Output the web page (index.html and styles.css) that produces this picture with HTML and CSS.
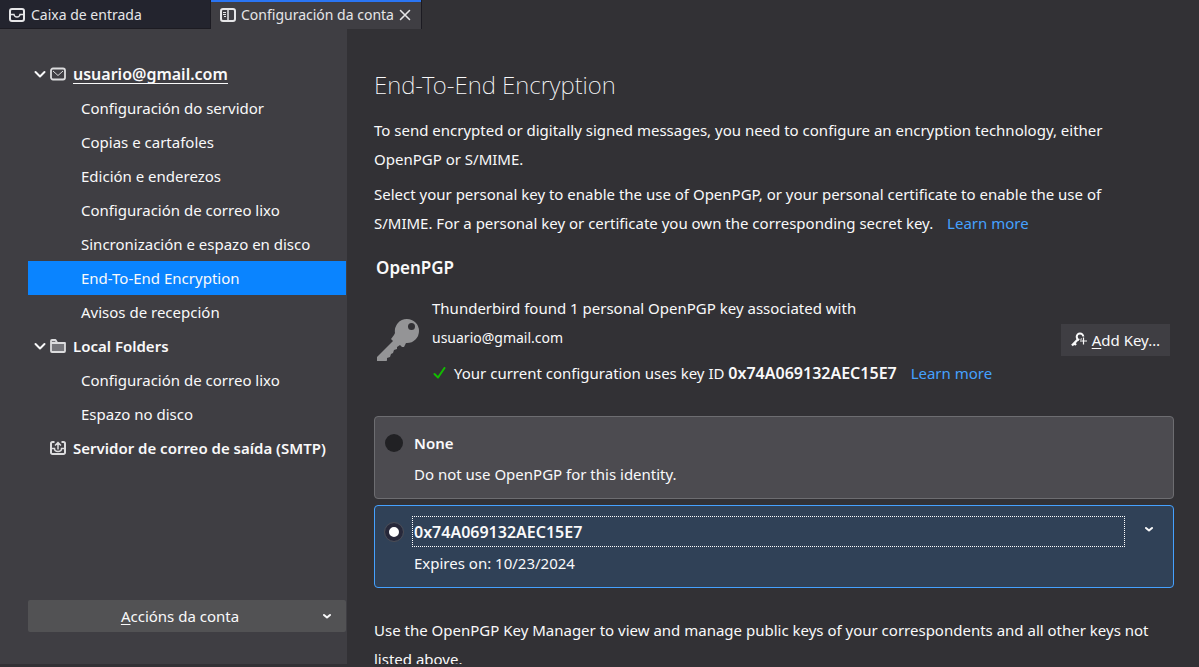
FILE: index.html
```html
<!DOCTYPE html>
<html lang="gl">
<head>
<meta charset="utf-8">
<title>Configuración da conta</title>
<link rel="stylesheet" href="styles.css">
</head>
<body>
<header class="tabs">
  <button class="tab" type="button">
    <svg class="icon" viewBox="0 0 16 16" fill="none" stroke="currentColor" stroke-width="2"><rect x="1" y="2" width="14" height="12" rx="2"/><path d="M1.500 7.500H5C5.300 9.300 6.500 10 8 10s2.700-.7 3-2.500h3.500" stroke-width="1.500"/></svg>
    <span>Caixa de entrada</span>
  </button>
  <div class="tab tab-active">
    <svg class="icon" viewBox="0 0 16 16" fill="none" stroke="currentColor" stroke-width="2"><rect x="1" y="2" width="14" height="12" rx="2"/><path d="M8 2v12" stroke-width="1.500"/><path d="M3 5.500h3M3 7.500h3M4 9.500h2" stroke-width="1"/></svg>
    <span>Configuración da conta</span>
    <button class="close" type="button" aria-label="Pechar">
      <svg viewBox="0 0 12 12" fill="none" stroke="currentColor" stroke-width="1.600" stroke-linecap="round"><path d="M1.500 1.500l9 9M10.500 1.500l-9 9"/></svg>
    </button>
  </div>
</header>
<div class="workspace">
  <nav class="sidebar">
    <ul class="tree">
      <li><a class="row group" href="#conta">
        <svg class="chevron" viewBox="0 0 12 12" fill="none" stroke="currentColor" stroke-width="2" stroke-linecap="round" stroke-linejoin="round"><path d="M1.500 4L6 8.500 10.500 4"/></svg>
        <svg class="icon" viewBox="0 0 16 16" fill="none" stroke="currentColor" stroke-width="1.800" stroke-linejoin="round"><rect x="1" y="2.500" width="14" height="11" rx="2"/><path d="M3 5l5 4.500L13 5" stroke-width="1"/></svg>
        <span class="underlined">usuario@gmail.com</span></a></li>
      <li><a class="row item" href="#servidor">Configuración do servidor</a></li>
      <li><a class="row item" href="#copias">Copias e cartafoles</a></li>
      <li><a class="row item" href="#enderezos">Edición e enderezos</a></li>
      <li><a class="row item" href="#lixo">Configuración de correo lixo</a></li>
      <li><a class="row item" href="#disco">Sincronización e espazo en disco</a></li>
      <li><a class="row item selected" href="#e2e">End-To-End Encryption</a></li>
      <li><a class="row item" href="#avisos">Avisos de recepción</a></li>
      <li><a class="row group" href="#local">
        <svg class="chevron" viewBox="0 0 12 12" fill="none" stroke="currentColor" stroke-width="2" stroke-linecap="round" stroke-linejoin="round"><path d="M1.500 4L6 8.500 10.500 4"/></svg>
        <svg class="icon" viewBox="0 0 16 16" fill="none" stroke="currentColor" stroke-width="1.800" stroke-linejoin="round"><path d="M1 5h14v8a1 1 0 0 1-1 1H2a1 1 0 0 1-1-1V3a1 1 0 0 1 1-1h3.500L7 4.500" fill="#75757a"/></svg>
        <span>Local Folders</span></a></li>
      <li><a class="row item" href="#local-lixo">Configuración de correo lixo</a></li>
      <li><a class="row item" href="#local-disco">Espazo no disco</a></li>
      <li><a class="row group" href="#smtp">
        <span class="chevron"></span>
        <svg class="icon" viewBox="0 0 16 16" fill="none" stroke="currentColor" stroke-width="2"><path d="M4.500 2H2.500A1.500 1.500 0 0 0 1 3.500v9A1.500 1.500 0 0 0 2.500 14h11a1.500 1.500 0 0 0 1.500-1.500v-9A1.500 1.500 0 0 0 13.500 2h-2"/><path d="M1 8.500h3.500c0 2 1.500 3 3.500 3s3.500-1 3.500-3H15M8 9.500V3M5 5.500L8 2.500l3 3" stroke-width="1.500"/></svg>
        <span>Servidor de correo de saída (SMTP)</span></a></li>
    </ul>
    <button class="actions" type="button">
      <span class="actions-label"><u>A</u>ccións da conta</span>
      <svg class="caret" viewBox="0 0 8 8" fill="none" stroke="currentColor" stroke-width="2" stroke-linecap="round" stroke-linejoin="round"><path d="M1 3l3 2.500L7 3"/></svg>
    </button>
  </nav>
  <main class="content">
    <h1 class="title">End-To-End Encryption</h1>
    <p class="text">To send encrypted or digitally signed messages, you need to configure an encryption technology, either OpenPGP or S/MIME.</p>
    <p class="text">Select your personal key to enable the use of OpenPGP, or your personal certificate to enable the use of S/MIME. For a personal key or certificate you own the corresponding secret key. <a class="link" href="#more">Learn more</a></p>
    <h2 class="subtitle">OpenPGP</h2>
    <section class="status">
      <svg class="key" viewBox="0 0 42 42"><path fill="#949496" fill-rule="evenodd" d="M30 0a12 12 0 0 1 0 24h-1l-2 4h-2l-2-2-3 2v2l-3 1-1 3-2 1-1 3-3 1v2l-1 3H0v-6l16-16-2-2 3-4 1-2A12 12 0 0 1 30 0zM34.500 4a3.500 3.500 0 1 0 0 7 3.500 3.500 0 0 0 0-7z"/></svg>
      <div class="status-text">
        <p>Thunderbird found 1 personal OpenPGP key associated with</p>
        <p class="address">usuario@gmail.com</p>
        <p class="config">
          <svg class="check" viewBox="0 0 14 14" fill="none" stroke="#12bc00" stroke-width="2" stroke-linecap="round" stroke-linejoin="round"><path d="M2.500 7L6 10.500 12.500 1"/></svg>
          <span>Your current configuration uses key ID <strong>0x74A069132AEC15E7</strong> <a class="link" href="#key-more">Learn more</a></span>
        </p>
      </div>
      <button class="add" type="button">
        <svg class="icon" viewBox="0 0 16 16" fill="none" stroke="currentColor"><circle cx="9" cy="4.800" r="3.300" stroke-width="2"/><path d="M6.800 7.500L1 13.500M3.500 11.500l1.500 1.500" stroke-width="2.400"/><path d="M12.500 4.500v9M8 9h8" stroke="#3f3e43" stroke-width="3"/><path d="M12.500 5.500v7M9 9h7" stroke-width="1.200"/></svg>
        <span><u>A</u>dd Key…</span>
      </button>
    </section>
    <div class="card">
      <input class="radio" type="radio" name="key" id="key-none">
      <label class="name" for="key-none">None</label>
      <p class="detail">Do not use OpenPGP for this identity.</p>
    </div>
    <div class="card card-selected">
      <input class="radio" type="radio" name="key" id="key-own" checked>
      <label class="name" for="key-own">0x74A069132AEC15E7</label>
      <button class="expand" type="button" aria-label="Details">
        <svg class="caret" viewBox="0 0 8 8" fill="none" stroke="currentColor" stroke-width="2" stroke-linecap="round" stroke-linejoin="round"><path d="M1 3l3 2.500L7 3"/></svg>
      </button>
      <p class="detail">Expires on: 10/23/2024</p>
    </div>
    <p class="text footnote">Use the OpenPGP Key Manager to view and manage public keys of your correspondents and all other keys not listed above.</p>
  </main>
</div>
</body>
</html>
```
FILE: styles.css
```css
* { box-sizing: border-box; }
body {
  margin: 0;
  height: 100vh;
  padding-bottom: 3px;
  display: flex;
  flex-direction: column;
  overflow: hidden;
  background: #323135;
  color: #f9f9fa;
  font: 15px/29px "Noto Sans", sans-serif;
}
h1, h2, p, ul { margin: 0; padding: 0; }
button {
  border: 0;
  padding: 0;
  background: none;
  color: inherit;
  font: inherit;
}
svg { flex: none; display: block; }
u { text-underline-offset: 2px; text-decoration-thickness: 1px; }
.icon { width: 16px; height: 16px; }
.caret { width: 8px; height: 8px; }

.tabs { display: flex; flex: none; height: 29px; color: #e6e6e8; }
.tab {
  display: flex;
  align-items: center;
  gap: 6px;
  width: 211px;
  padding: 1px 9px 0;
  background: #23242e;
  border: solid #1c1b22;
  border-width: 0 1px 1px 0;
  font-size: 14px;
  line-height: 20px;
  white-space: nowrap;
}
.tab-active {
  gap: 5px;
  background: #3f3e43;
  border-bottom: 0;
  box-shadow: inset 0 2px #2a75f3;
}
.close { width: 12px; height: 12px; }

.workspace { display: flex; flex: 1; min-height: 0; }
.sidebar {
  display: flex;
  flex-direction: column;
  justify-content: space-between;
  flex: none;
  width: 347px;
  padding: 28px 1px 32px 28px;
  background: #3f3e43;
}
.tree { list-style: none; }
.row {
  display: flex;
  align-items: center;
  height: 34px;
  color: inherit;
  text-decoration: none;
  white-space: nowrap;
}
.item { padding-left: 53px; }
.group { padding-left: 6px; font-weight: 600; }
.group .chevron { width: 12px; height: 12px; margin-right: 4px; }
.group .icon { margin-right: 7px; color: #dcdcde; }
.underlined { font-size: 16px; line-height: 18px; border-bottom: 1px solid; }
.selected { background: #0a84ff; }
.actions {
  display: flex;
  align-items: center;
  height: 32px;
  padding: 0 15px 0 9px;
  border-radius: 2px;
  background: #525254;
  line-height: 20px;
}
.actions-label { flex: 1; }

.content {
  flex: 1;
  min-width: 0;
  padding: 40px 25px 0 27px;
  overflow: hidden;
}
.title {
  margin-bottom: 15px;
  font-size: 24px;
  font-weight: 200;
  line-height: 32px;
}
.text { margin-bottom: 6px; padding-right: 16px; }
.link { margin-left: 10px; color: #45a1ff; text-decoration: none; }
.subtitle {
  margin: 15px 2px 11px;
  font-size: 17px;
  font-weight: 600;
  line-height: 30px;
}
.status {
  display: flex;
  align-items: center;
  padding: 0 4px 0 3px;
  margin-bottom: 28px;
}
.key { width: 42px; height: 42px; margin: 0 13px 2px 0; }
.status-text { flex: 1; min-width: 0; }
.address { font-size: 14px; }
.config { display: flex; align-items: center; gap: 8px; margin-top: 7px; }
.check { width: 14px; height: 14px; }
strong { font-weight: 600; }
.config strong, .card-selected .name { font-size: 16px; }
.add {
  display: flex;
  align-items: center;
  gap: 5px;
  height: 32px;
  margin-bottom: 2px;
  padding: 0 10px;
  background: #3f3e43;
  line-height: 20px;
}
.card {
  display: grid;
  grid-template-columns: 18px 1fr 48px;
  column-gap: 9px;
  grid-template-rows: 31px 31px;
  align-items: center;
  padding: 10px 0 9px 10px;
  margin-bottom: 6px;
  border: 1px solid #6d6d71;
  border-radius: 4px;
  background: #4c4b50;
}
.card-selected { background: #304157; border-color: #45a1ff; }
.radio {
  appearance: none;
  width: 18px;
  height: 18px;
  margin: 0;
  border: 0;
  border-radius: 50%;
  background: #212124;
}
.radio:checked {
  border: 4px solid #27283a;
  outline: 1px solid #4b4b54;
  background: #ffffff;
}
.name {
  padding: 2px 1px 0;
  border: 1px solid transparent;
  font-weight: 600;
  line-height: 27px;
}
.card-selected .name { border: 1px dotted #ffffff; margin-right: -9px; }
.expand { display: grid; place-items: center; height: 26px; align-self: start; }
.detail { grid-column: 2; padding: 2px 0 0 2px; }
.footnote { margin-top: 28px; }
```
